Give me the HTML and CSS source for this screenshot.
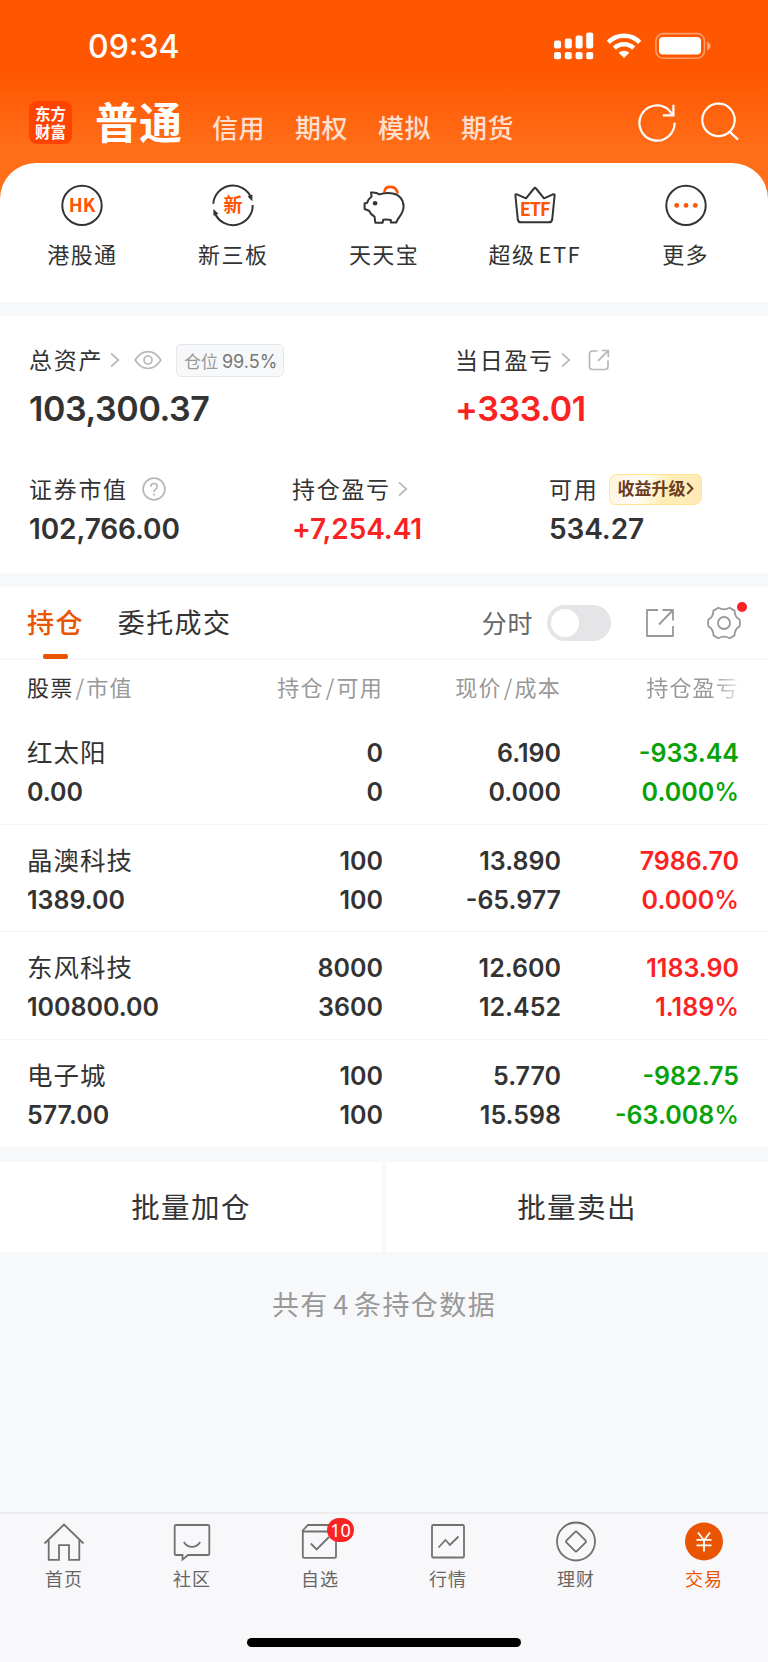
FILE: index.html
```
<!DOCTYPE html>
<html lang="zh-CN">
<head>
    <meta charset="UTF-8">
    <meta name="viewport" content="width=device-width, initial-scale=1.0">
    <title>交易</title>
    <link rel="stylesheet" href="styles.css">
</head>
<body>
    <header class="header">
        <div class="status-bar">
            <span class="time">09:34</span>
            <div class="status-icons">
                <svg width="40" height="28" viewBox="0 0 40 28" fill="#fff">
                    <rect x="0" y="8.5" width="7" height="8" rx="2"/>
                    <rect x="10.8" y="6.5" width="7" height="10" rx="2"/>
                    <rect x="21.6" y="3.5" width="7" height="13" rx="2"/>
                    <rect x="32.2" y="0.5" width="7" height="16" rx="2"/>
                    <rect x="0" y="20" width="7" height="7.3" rx="2"/>
                    <rect x="10.8" y="20" width="7" height="7.3" rx="2"/>
                    <rect x="21.6" y="20" width="7" height="7.3" rx="2"/>
                    <rect x="32.2" y="20" width="7" height="7.3" rx="2"/>
                </svg>
                <svg class="wifi" width="36" height="28" viewBox="0 0 36 28">
                    <g fill="none" stroke="#fff" stroke-width="4.6">
                        <path d="M2.4 10.3a22 22 0 0 1 31.2 0"/>
                        <path d="M8.3 16.2a13.8 13.8 0 0 1 19.4 0"/>
                    </g>
                    <path d="M18 26l-5.3-5.2a7.6 7.6 0 0 1 10.6 0z" fill="#fff"/>
                </svg>
                <svg class="battery" width="57" height="28" viewBox="0 0 57 28">
                    <rect x="0.9" y="1.6" width="48.6" height="24.6" rx="7.5" fill="none" stroke="#fff" stroke-opacity="0.42" stroke-width="1.6"/>
                    <rect x="4" y="5" width="42" height="17.6" rx="4" fill="#fff"/>
                    <path d="M52.2 9.8c4.4 1.6 4.4 7 0 8.6z" fill="#fff" fill-opacity="0.5"/>
                </svg>
            </div>
        </div>
        <nav class="account-nav">
            <div class="logo"><span>东方</span><span>财富</span></div>
            <span class="account active">普通</span>
            <span class="account">信用</span>
            <span class="account">期权</span>
            <span class="account">模拟</span>
            <span class="account">期货</span>
            <div class="header-icons">
                <svg width="40" height="40" viewBox="0 0 40 40" fill="none" stroke="#fff" stroke-width="2.2">
                    <path d="M37.6 20.8A17.6 17.6 0 1 1 31.500 7.700L36 12.800"/>
                    <path d="M36.400 2.800v10.600H25.800"/>
                </svg>
                <svg class="search" width="40" height="40" viewBox="0 0 40 40" fill="none" stroke="#fff" stroke-width="2.2">
                    <circle cx="18.500" cy="17.900" r="16.200"/>
                    <path d="M29.600 29.600l8.400 8"/>
                </svg>
            </div>
        </nav>
    </header>

    <!-- Shortcuts -->
    <section class="shortcuts">
        <div class="shortcut">
            <svg width="44" height="44" viewBox="0 0 44 44">
                <circle cx="22" cy="22.400" r="19.700" fill="none" stroke="#333" stroke-width="2"/>
                <text class="icon-text" x="22" y="29.200" font-size="18.500">HK</text>
            </svg>
            <span>港股通</span>
        </div>
        <div class="shortcut">
            <svg width="44" height="44" viewBox="0 0 44 44">
                <g fill="none" stroke="#333" stroke-width="2">
                    <path d="M2.300 20.800A19.700 19.700 0 0 1 40.200 14.800"/>
                    <path d="M41.700 22A19.700 19.700 0 0 1 3.800 30"/>
                </g>
                <path d="M36.600 13.600l4.800-2v6.600z M7.400 30.800l-5-4.800v6.800z" fill="#333"/>
                <text class="icon-text" x="22" y="29.300" font-size="19">新</text>
            </svg>
            <span>新三板</span>
        </div>
        <div class="shortcut">
            <svg width="44" height="44" viewBox="0 0 44 44">
                <path d="M9 9.600c3-.6 6 .2 8.600 1.800 4-1.200 9-1.600 13-1 6.800 1 11 6.400 11 13 0 5.600-3.500 9.600-5.800 12.800l-1.600 3.400h-5.400v-2.600c-2.400-.7-5.600-.7-7.600-.2l-.6 2.900h-7.300l-.8-6c-2.500-1.300-4.400-3.300-5.500-6L2.600 26v-5.500l2.600-.8c.8-2.600 2.200-4.600 4.400-6.200z" fill="none" stroke="#333" stroke-width="2" stroke-linejoin="round"/>
                <circle cx="13.100" cy="20.300" r="2.300" fill="#333"/>
                <path d="M22.500 8.200c1.200-6 11-6 13 1.200" fill="none" stroke="#ff5500" stroke-width="2.600" stroke-linecap="round"/>
            </svg>
            <span>天天宝</span>
        </div>
        <div class="shortcut">
            <svg width="44" height="44" viewBox="0 0 44 44">
                <path d="M2.400 12.500c-.1-1 .6-1.600 1.600-1.200l9 4 8-9.800q1-1.300 2 0l8 9.800 9-4c1-.4 1.700.2 1.600 1.200l-2.400 24q-.4 2.800-3.200 2.800H8q-2.800 0-3.200-2.800z" fill="none" stroke="#333" stroke-width="2" stroke-linejoin="round"/>
                <text class="icon-text etf" x="21.700" y="32.800" font-size="18">ETF</text>
            </svg>
            <span class="tight">超级 ETF</span>
        </div>
        <div class="shortcut">
            <svg width="44" height="44" viewBox="0 0 44 44">
                <circle cx="22" cy="22.400" r="19.700" fill="none" stroke="#333" stroke-width="2"/>
                <g fill="#ff5500">
                    <circle cx="12.700" cy="22.400" r="2.400"/>
                    <circle cx="22" cy="22.400" r="2.400"/>
                    <circle cx="31.300" cy="22.400" r="2.400"/>
                </g>
            </svg>
            <span>更多</span>
        </div>
    </section>

    <!-- Assets -->
    <section class="assets">
        <div class="asset-row total">
            <div class="asset">
                <div class="asset-label">
                    <span>总资产</span>
                    <svg class="chevron" width="10" height="16" viewBox="0 0 10 16"><path d="M1 1.300l7.300 6.700L1 14.700"/></svg>
                    <svg class="eye" width="28" height="20" viewBox="0 0 28 20">
                        <path d="M1.200 10C8-1.300 20-1.300 26.800 10 20 21.300 8 21.300 1.200 10z"/>
                        <circle cx="14" cy="10" r="4"/>
                    </svg>
                    <div class="position-tag">仓位 <b>99.5%</b></div>
                </div>
                <div class="asset-value">103,300.37</div>
            </div>
            <div class="asset">
                <div class="asset-label">
                    <span>当日盈亏</span>
                    <svg class="chevron" width="10" height="16" viewBox="0 0 10 16"><path d="M1 1.300l7.300 6.700L1 14.700"/></svg>
                    <svg class="share-small" width="22" height="22" viewBox="0 0 22 22">
                        <path d="M9.500 2H4.500Q1.500 2 1.500 5v12.500q0 3 3 3H17q3 0 3-3V11.500M13.800 1.500H20.300V8M20 1.800L10 11.800"/>
                    </svg>
                </div>
                <div class="asset-value up">+333.01</div>
            </div>
        </div>
        <div class="asset-row detail">
            <div class="asset">
                <div class="asset-label">
                    <span>证券市值</span>
                    <svg class="help" width="24" height="24" viewBox="0 0 24 24">
                        <circle cx="12" cy="12" r="10.900"/>
                        <path d="M8.800 9.700c0-4.200 6.500-4.200 6.500-.2 0 2.700-3.300 2.700-3.300 5.500M12 16.600v2"/>
                    </svg>
                </div>
                <div class="asset-value">102,766.00</div>
            </div>
            <div class="asset">
                <div class="asset-label">
                    <span>持仓盈亏</span>
                    <svg class="chevron" width="10" height="16" viewBox="0 0 10 16"><path d="M1 1.300l7.300 6.700L1 14.700"/></svg>
                </div>
                <div class="asset-value up">+7,254.41</div>
            </div>
            <div class="asset">
                <div class="asset-label">
                    <span>可用</span>
                    <div class="upgrade">收益升级<svg width="8" height="13" viewBox="0 0 8 13"><path d="M1.200 1l5.200 5.500L1.200 12"/></svg></div>
                </div>
                <div class="asset-value">534.27</div>
            </div>
        </div>
    </section>

    <!-- Holdings -->
    <section class="holdings">
        <div class="tabs">
            <span class="tab active">持仓</span>
            <span class="tab">委托成交</span>
            <div class="tools">
                <span class="tool-label">分时</span>
                <span class="switch"></span>
                <svg class="share" width="30" height="30" viewBox="0 0 30 30">
                    <path d="M13 2H2v26h26V18M17.500 2H28v10.500M28 2L14 16.500"/>
                </svg>
                <div class="settings">
                    <svg width="34" height="34" viewBox="0 0 34 34">
                        <path d="M11.300 1.800Q17 5 22.700 1.800L27.600 4.600Q27.500 11 32.600 13.600 33.200 17 32.600 20.400 27.500 23 27.600 29.400L22.700 32.200Q17 29 11.300 32.200L6.400 29.400Q6.500 23 1.400 20.400.8 17 1.400 13.600 6.500 11 6.400 4.600z"/>
                        <circle cx="17" cy="17" r="6"/>
                    </svg>
                    <i class="dot"></i>
                </div>
            </div>
        </div>
        <div class="row row-head">
            <div><em>股票</em><i>/</i>市值</div>
            <div>持仓<i>/</i>可用</div>
            <div>现价<i>/</i>成本</div>
            <div class="fade">持仓盈亏</div>
        </div>
        <div class="row">
            <div><p class="name">红太阳</p><p>0.00</p></div>
            <div><p>0</p><p>0</p></div>
            <div><p>6.190</p><p>0.000</p></div>
            <div class="down"><p>-933.44</p><p>0.000<small>%</small></p></div>
        </div>
        <div class="row">
            <div><p class="name">晶澳科技</p><p>1389.00</p></div>
            <div><p>100</p><p>100</p></div>
            <div><p>13.890</p><p>-65.977</p></div>
            <div class="up"><p>7986.70</p><p>0.000<small>%</small></p></div>
        </div>
        <div class="row">
            <div><p class="name">东风科技</p><p>100800.00</p></div>
            <div><p>8000</p><p>3600</p></div>
            <div><p>12.600</p><p>12.452</p></div>
            <div class="up"><p>1183.90</p><p>1.189<small>%</small></p></div>
        </div>
        <div class="row">
            <div><p class="name">电子城</p><p>577.00</p></div>
            <div><p>100</p><p>100</p></div>
            <div><p>5.770</p><p>15.598</p></div>
            <div class="down"><p>-982.75</p><p>-63.008<small>%</small></p></div>
        </div>
    </section>

    <div class="batch">
        <div class="batch-btn">批量加仓</div>
        <div class="batch-btn">批量卖出</div>
    </div>
    <p class="summary tight">共有 4 条持仓数据</p>

    <!-- Bottom bar -->
    <footer class="bottom-bar">
        <div class="bottom-items">
            <div class="item">
                <svg width="42" height="42" viewBox="0 0 42 42">
                    <path d="M1.500 22.500L21 3.500l19.500 19M5.700 18.500v20.300H16V24.200h10v14.600h10.300V18.500"/>
                </svg>
                <span>首页</span>
            </div>
            <div class="item">
                <svg width="42" height="42" viewBox="0 0 42 42">
                    <path d="M5 4h32q1.300 0 1.300 1.300v27.400q0 1.300-1.300 1.300H17l-5.500 4.600V34H5q-1.300 0-1.300-1.300V5.300Q3.700 4 5 4zM12.800 21c4 6.500 12.400 6.500 16.400 0"/>
                </svg>
                <span>社区</span>
            </div>
            <div class="item">
                <svg width="42" height="42" viewBox="0 0 42 42">
                    <path d="M9 4h23l5 5.500v25.700q0 1.600-1.600 1.600H5.400q-1.600 0-1.600-1.600V9.500zM3.800 10.500H37M11.800 22.500l5.800 6L30 16"/>
                </svg>
                <span>自选</span>
                <b class="badge">10</b>
            </div>
            <div class="item">
                <svg width="42" height="42" viewBox="0 0 42 42">
                    <rect x="5" y="4" width="32" height="32.500" rx="1.300"/>
                    <path d="M11.500 26.500l7-7.500 4.500 5 8.500-8.500"/>
                </svg>
                <span>行情</span>
            </div>
            <div class="item">
                <svg width="42" height="42" viewBox="0 0 42 42">
                    <circle cx="21" cy="20.500" r="19"/>
                    <path d="M20.200 10.800q.8-.8 1.600 0l8.900 8.900q.8.800 0 1.600l-8.900 8.900q-.8.800-1.600 0l-8.900-8.900q-.8-.8 0-1.600z"/>
                </svg>
                <span>理财</span>
            </div>
            <div class="item active">
                <svg width="42" height="42" viewBox="0 0 42 42">
                    <circle class="coin" cx="21" cy="20.500" r="19"/>
                    <path class="yen" d="M15 11.500l6 7.700 6-7.700M21 19v11.500M13.500 18.800h15M13.500 24.300h15"/>
                </svg>
                <span>交易</span>
            </div>
        </div>
        <div class="home-indicator"></div>
    </footer>
</body>
</html>
```
FILE: styles.css
```
* {
    box-sizing: border-box;
}
body {
    margin: 0;
    height: 1662px;
    display: flex;
    flex-direction: column;
    font-family: "Noto Sans CJK SC", sans-serif;
    color: #333;
    background-color: #f7f8fa;
    background-image: linear-gradient(#ff5700 75px, #ff6e19 150px, #ff6e19 230px, transparent 230px);
    background-repeat: no-repeat;
}
p {
    margin: 0;
}
svg {
    display: block;
    flex: none;
}
.tight {
    word-spacing: -3px;
}

/* Header */
.header {
    height: 163px;
    flex: none;
    color: #fff;
}
.status-bar {
    height: 92px;
    padding: 0 56px 0 88px;
    display: flex;
    justify-content: space-between;
    align-items: center;
}
.time {
    font-family: Inter, sans-serif;
    font-size: 32px;
    font-weight: 500;
}
.status-icons {
    display: flex;
    align-items: center;
}
.wifi {
    margin-left: 12px;
}
.battery {
    margin-left: 13px;
}
.account-nav {
    height: 60px;
    padding: 0 28px 0 29px;
    display: flex;
    align-items: center;
}
.logo {
    width: 43px;
    height: 43px;
    margin-right: 23px;
    padding-top: 3px;
    border-radius: 8px;
    background: #ff4302;
    text-align: center;
    font-size: 15.5px;
    font-weight: 700;
    line-height: 18px;
}
.logo span {
    display: block;
}
.account {
    height: 60px;
    line-height: 70px;
    margin-right: 30px;
    font-size: 26px;
    font-weight: 500;
    letter-spacing: 0.5px;
    color: #ffdfce;
}
.account.active {
    line-height: 56px;
    margin-right: 29px;
    font-size: 43px;
    font-weight: 700;
    letter-spacing: 1px;
    color: #fff;
}
.header-icons {
    margin-left: auto;
    display: flex;
    gap: 23px;
}

/* Shortcuts */
.shortcuts {
    height: 139px;
    flex: none;
    padding: 20px 7px 0;
    display: flex;
    background: #fff;
    border-radius: 36px 36px 0 0;
}
.shortcut {
    flex: 1;
    display: flex;
    flex-direction: column;
    align-items: center;
    font-size: 22px;
    line-height: 30px;
    letter-spacing: 1.4px;
}
.shortcut span {
    margin-top: 11px;
    white-space: nowrap;
}
.icon-text {
    fill: #ff5500;
    text-anchor: middle;
    font-family: "Noto Sans CJK SC", sans-serif;
    font-weight: 700;
    letter-spacing: 0;
}
.icon-text.etf {
    letter-spacing: -1px;
}

/* Assets */
.assets {
    height: 257px;
    flex: none;
    margin-top: 14px;
    padding: 24px 30px 0 29px;
    background: #fff;
}
.asset-row {
    display: grid;
}
.asset-row.total {
    grid-template-columns: 426px 1fr;
}
.asset-row.detail {
    grid-template-columns: 263px 257px 1fr;
    margin-top: 36px;
}
.asset-label {
    height: 40px;
    display: flex;
    align-items: center;
    font-size: 23px;
    letter-spacing: 1.7px;
    white-space: nowrap;
}
.asset-label > span {
    padding-bottom: 3px;
}
.asset-label svg {
    fill: none;
    stroke: #b8b8b8;
    stroke-width: 1.7;
}
.chevron {
    margin-left: 7px;
}
.eye {
    margin-left: 14px;
}
.share-small {
    margin-left: 17px;
}
.help {
    margin-left: 14px;
}
.asset-value {
    font-family: Inter, sans-serif;
    font-size: 28px;
    font-weight: 600;
    line-height: 41px;
    letter-spacing: -0.1px;
}
.total .asset-value {
    font-size: 34px;
    line-height: 53px;
    height: 53px;
    padding-top: 2px;
    letter-spacing: -0.4px;
}
.position-tag {
    height: 33px;
    margin-left: 14px;
    padding: 0 6px 0 7px;
    border: 1px solid #e6e7eb;
    border-radius: 5px;
    background: #f7f8fa;
    font-size: 17px;
    line-height: 31px;
    letter-spacing: 0;
    color: #999;
}
.position-tag b {
    font-family: Inter, sans-serif;
    font-size: 18px;
    font-weight: 400;
    color: #777;
}
.upgrade {
    height: 31px;
    margin-left: 11px;
    padding: 0 7px 3px;
    display: flex;
    align-items: center;
    gap: 1px;
    border: 1px solid #ffe590;
    border-radius: 8px 6px 8px 6px;
    background: linear-gradient(110deg, #fff3dc, #fffdf8 35%, #ffeeb5 60%, #ffe9b8);
    font-size: 17px;
    font-weight: 700;
    letter-spacing: 0;
    color: #6b3d1e;
}
.asset-label .upgrade svg {
    margin-top: 2px;
    stroke: #6b3d1e;
    stroke-width: 2;
}
.up {
    color: #fb2222;
}
.down {
    color: #08a208;
}

/* Holdings */
.holdings {
    flex: none;
    height: 559.5px;
    margin-top: 14px;
    background: #fff;
}
.tabs {
    height: 73px;
    padding: 0 27px 0 27px;
    display: flex;
    align-items: center;
    border-bottom: 2px solid #f6f7f8;
}
.tab {
    position: relative;
    margin-right: 34px;
    font-size: 27px;
    line-height: 70px;
    height: 72px;
    letter-spacing: 1.4px;
}
.tab.active {
    font-weight: 500;
    color: #ea5504;
}
.tab.active::after {
    content: "";
    position: absolute;
    left: 16px;
    bottom: 0;
    width: 25px;
    height: 5px;
    border-radius: 2px;
    background: #ea5504;
}
.tools {
    margin-left: auto;
    display: flex;
    align-items: center;
}
.tool-label {
    padding-bottom: 2px;
    font-size: 25px;
    letter-spacing: 0.6px;
    color: #666;
}
.switch {
    width: 64px;
    height: 36px;
    margin-left: 14px;
    padding: 4px;
    border-radius: 18px;
    background: #e5e5e7;
}
.switch::before {
    content: "";
    display: block;
    width: 28px;
    height: 28px;
    border-radius: 50%;
    background: #fff;
}
.share,
.settings svg {
    fill: none;
    stroke: #999;
    stroke-width: 1.8;
    stroke-linejoin: round;
}
.share {
    margin-left: 34px;
}
.settings {
    position: relative;
    margin-left: 32px;
}
.dot {
    position: absolute;
    top: -4px;
    right: -6px;
    width: 10px;
    height: 10px;
    border-radius: 50%;
    background: #f92323;
}
.row {
    height: 107.6px;
    padding: 17px 29px 0 27px;
    display: grid;
    grid-template-columns: 1fr 150px 178px 178px;
    text-align: right;
    font-family: Inter, "Noto Sans CJK SC", sans-serif;
    font-size: 25px;
    font-weight: 600;
    line-height: 39px;
    border-bottom: 1px solid #f3f4f5;
}
.row:last-child {
    border-bottom: 0;
}
.row > :first-child {
    text-align: left;
}
.row small {
    font-size: 25px;
    font-weight: 500;
}
.row .name {
    margin-bottom: 5px;
    font-family: "Noto Sans CJK SC", sans-serif;
    font-size: 25.5px;
    font-weight: 400;
    line-height: 34px;
    letter-spacing: 1px;
}
.row-head {
    height: 57px;
    padding-top: 7px;
    font-family: "Noto Sans CJK SC", sans-serif;
    font-size: 22px;
    font-weight: 400;
    letter-spacing: 1.2px;
    color: #999;
    border-bottom: 0;
}
.row-head em {
    font-style: normal;
    color: #333;
}
.row-head i {
    margin: 0 1px 0 2px;
    font-style: normal;
}
.row-head .fade {
    -webkit-mask-image: linear-gradient(to right, #000 calc(100% - 26px), rgba(0, 0, 0, 0.2));
    mask-image: linear-gradient(to right, #000 calc(100% - 26px), rgba(0, 0, 0, 0.2));
}

/* Batch buttons */
.batch {
    margin-top: 15px;
    flex: none;
    height: 90px;
    display: flex;
    gap: 4px;
}
.batch-btn {
    flex: 1;
    background: #fff;
    text-align: center;
    font-size: 28.5px;
    line-height: 88px;
    letter-spacing: 1.4px;
}
.summary {
    margin-top: 32px;
    text-align: center;
    font-size: 27px;
    line-height: 40px;
    letter-spacing: 1.4px;
    color: #999;
}

/* Bottom bar */
.bottom-bar {
    height: 150px;
    flex: none;
    margin-top: auto;
    border-top: 2px solid #ededef;
    background: #f8f8fa;
}
.bottom-items {
    height: 124px;
    padding-top: 7px;
    display: flex;
}
.item {
    position: relative;
    flex: 1;
    display: flex;
    flex-direction: column;
    align-items: center;
    font-size: 18px;
    line-height: 26px;
    letter-spacing: 1px;
    color: #666;
}
.item svg {
    fill: none;
    stroke: #717171;
    stroke-width: 1.8;
    margin-bottom: 2px;
}
.item.active {
    color: #ea5504;
}
.item .coin {
    fill: #ea5504;
    stroke: none;
}
.item .yen {
    stroke: #fff;
}
.badge {
    position: absolute;
    top: -3px;
    left: 71px;
    width: 27px;
    height: 24px;
    border-radius: 12px;
    background: #f92323;
    color: #fff;
    text-align: center;
    font-family: "Noto Sans", sans-serif;
    font-size: 18px;
    font-weight: 400;
    line-height: 24px;
    letter-spacing: 0;
}
.home-indicator {
    width: 274px;
    height: 9px;
    margin: 0 auto;
    border-radius: 5px;
    background: #000;
}
```
